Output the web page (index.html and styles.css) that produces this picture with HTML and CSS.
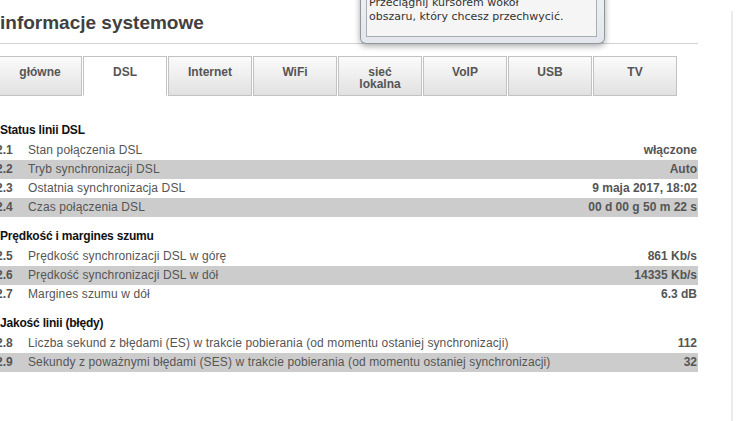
FILE: index.html
```html
<!DOCTYPE html>
<html lang="pl">
<head>
<meta charset="utf-8">
<title>informacje systemowe</title>
<link rel="stylesheet" href="styles.css">
</head>
<body>
<div class="shell">
  <div class="content">
    <h1 class="title">informacje systemowe</h1>
    <nav class="tabs">
      <div class="tab">główne</div>
      <div class="tab active">DSL</div>
      <div class="tab">Internet</div>
      <div class="tab">WiFi</div>
      <div class="tab">sieć<br>lokalna</div>
      <div class="tab">VoIP</div>
      <div class="tab">USB</div>
      <div class="tab">TV</div>
    </nav>

    <section class="group">
      <h3 class="group-title">Status linii DSL</h3>
      <div class="row"><span class="num">2.1</span><span class="label">Stan połączenia DSL</span><span class="value">włączone</span></div>
      <div class="row alt"><span class="num">2.2</span><span class="label">Tryb synchronizacji DSL</span><span class="value">Auto</span></div>
      <div class="row"><span class="num">2.3</span><span class="label">Ostatnia synchronizacja DSL</span><span class="value">9 maja 2017, 18:02</span></div>
      <div class="row alt"><span class="num">2.4</span><span class="label">Czas połączenia DSL</span><span class="value">00 d 00 g 50 m 22 s</span></div>
    </section>

    <section class="group">
      <h3 class="group-title">Prędkość i margines szumu</h3>
      <div class="row"><span class="num">2.5</span><span class="label">Prędkość synchronizacji DSL w górę</span><span class="value">861 Kb/s</span></div>
      <div class="row alt"><span class="num">2.6</span><span class="label">Prędkość synchronizacji DSL w dół</span><span class="value">14335 Kb/s</span></div>
      <div class="row"><span class="num">2.7</span><span class="label">Margines szumu w dół</span><span class="value">6.3 dB</span></div>
    </section>

    <section class="group">
      <h3 class="group-title">Jakość linii (błędy)</h3>
      <div class="row"><span class="num">2.8</span><span class="label">Liczba sekund z błędami (ES) w trakcie pobierania (od momentu ostaniej synchronizacji)</span><span class="value">112</span></div>
      <div class="row alt"><span class="num">2.9</span><span class="label">Sekundy z poważnymi błędami (SES) w trakcie pobierania (od momentu ostaniej synchronizacji)</span><span class="value">32</span></div>
    </section>
  </div>
</div>

<div class="snip">
  <div class="snip-inner">
    <p class="snip-text">Przeciągnij kursorem wokół<br>obszaru, który chcesz przechwycić.</p>
  </div>
</div>
</body>
</html>
```

FILE: styles.css
```css
html, body {
  margin: 0;
  padding: 0;
  background: #ffffff;
}

body {
  font-family: "Liberation Sans", Arial, sans-serif;
  font-size: 12px;
  color: #555555;
  position: relative;
  overflow: hidden;
  height: 421px;
}

.shell {
  margin-left: -4px;
  width: 735px;
  height: 415px;
  border-right: 2px solid #ebebeb;
}

.content {
  width: 702px;
}

.title {
  margin: 11px 0 0 0;
  padding: 0 0 8px 4px;
  font-size: 19px;
  line-height: 24px;
  font-weight: bold;
  color: #404040;
  border-bottom: 1px solid #d2d2d2;
}

.tabs {
  display: flex;
  gap: 1px;
  margin: 12px 0 15px 2px;
}

.tab {
  box-sizing: border-box;
  width: 84px;
  height: 40px;
  padding-top: 9px;
  border: 1px solid #c2c2c2;
  background: linear-gradient(#fbfbfb, #e1e1e1);
  text-align: center;
  font-weight: bold;
  font-size: 12px;
  line-height: 12px;
  color: #555555;
}

.tab.active {
  background: #ffffff;
  border-bottom-color: #ffffff;
}

.group-title {
  margin: 0;
  padding: 10px 0 1px 4px;
  font-size: 12px;
  line-height: 19px;
  font-weight: bold;
  letter-spacing: -0.2px;
  color: #111111;
}

.row {
  display: flex;
  height: 19px;
  line-height: 19px;
  white-space: nowrap;
}

.row.alt {
  background: #cccccc;
}

.num {
  width: 32px;
  flex: none;
  font-weight: bold;
  color: #555555;
}

.label {
  flex: 1;
  color: #555555;
  letter-spacing: 0.12px;
}

.value {
  font-weight: bold;
  color: #555555;
  padding-right: 1px;
}

.snip {
  position: absolute;
  left: 360px;
  top: -12px;
  width: 245px;
  height: 56px;
  box-sizing: border-box;
  padding: 0 7px 6px 5px;
  background: linear-gradient(#eef1f4, #e3e7eb);
  border: 1px solid #8e969e;
  border-top: none;
  border-radius: 0 0 6px 6px;
  box-shadow: 0 2px 6px rgba(0, 0, 0, 0.35);
  display: flex;
}

.snip-inner {
  flex: 1;
  background: #f5f5f5;
  border: 1px solid #a6adb4;
  border-top: none;
}

.snip-text {
  margin: 0;
  padding: 8px 0 0 2px;
  font-family: "DejaVu Sans", Verdana, sans-serif;
  font-size: 11px;
  line-height: 14px;
  color: #333333;
  white-space: nowrap;
}
```
